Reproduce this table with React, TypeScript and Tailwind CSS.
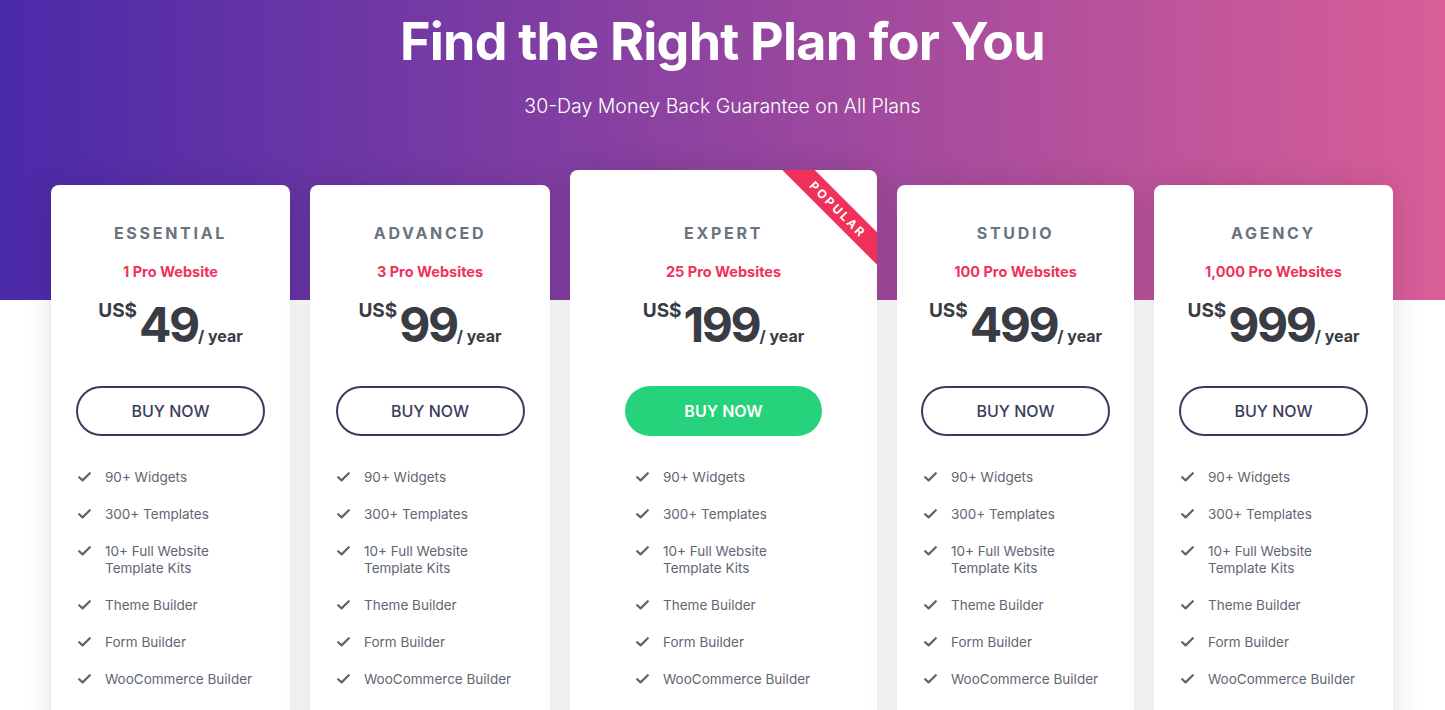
import React from "react"

interface Plan {
  name: string
  sites: string
  price: string
  width: string
  featured?: boolean
}

const plans: Plan[] = [
  { name: "ESSENTIAL", sites: "1 Pro Website", price: "49", width: "w-[239px]" },
  { name: "ADVANCED", sites: "3 Pro Websites", price: "99", width: "w-[240px]" },
  { name: "EXPERT", sites: "25 Pro Websites", price: "199", width: "w-[307px]", featured: true },
  { name: "STUDIO", sites: "100 Pro Websites", price: "499", width: "w-[237px]" },
  { name: "AGENCY", sites: "1,000 Pro Websites", price: "999", width: "w-[239px]" },
]

const features: string[][] = [
  ["90+ Widgets"],
  ["300+ Templates"],
  ["10+ Full Website", "Template Kits"],
  ["Theme Builder"],
  ["Form Builder"],
  ["WooCommerce Builder"],
  ["Popup Builder"],
  ["Premium Support"],
]

function Check() {
  return (
    <svg width="13" height="10" viewBox="0 0 13 10" className="mt-[3px] shrink-0">
      <path d="M1.2 5.2 L4.6 8.4 L11.8 1.2" fill="none" stroke="#5d6470" strokeWidth="2.2" strokeLinecap="round" strokeLinejoin="round" />
    </svg>
  )
}

function PlanCard({ plan }: { plan: Plan }) {
  return (
    <div
      className={`${plan.width} relative overflow-hidden rounded-lg bg-white shadow-[0_0_30px_rgba(0,0,0,0.12)] ${
        plan.featured ? "pt-[53px]" : "mt-[15px] pt-[38px]"
      } pb-10`}
    >
      {plan.featured && (
        <div className="absolute right-[-31px] top-[28px] flex h-[23px] w-[140px] rotate-45 items-center justify-center bg-[#f0325a] text-[12px] font-bold tracking-[0.2em] text-white">
          POPULAR
        </div>
      )}

      <h3 className="text-center text-[16px] font-bold leading-[20px] tracking-[0.17em] text-[#6a737e]">{plan.name}</h3>
      <p className="mt-5 text-center text-[14.5px] font-bold leading-[17px] text-[#f0325a]">{plan.sites}</p>

      {/* Price */}
      <div className="mt-[21px] flex items-baseline justify-center text-[#393c43]">
        <span className="self-start text-[19px] font-bold leading-none">US$</span>
        <span className="ml-[2px] text-[48px] font-bold leading-none tracking-[-0.05em]">{plan.price}</span>
        <span className="text-[16px] font-bold leading-none">/ year</span>
      </div>

      <div className="mt-[37px] flex justify-center">
        {plan.featured ? (
          <button className="h-[50px] w-[197px] rounded-full bg-[#26d27c] text-[16px] font-semibold text-white">BUY NOW</button>
        ) : (
          <button className="h-[50px] w-[189px] rounded-full border-2 border-[#3b3c5d] text-[16px] font-medium text-[#3b3c5d]">
            BUY NOW
          </button>
        )}
      </div>

      {/* Features */}
      <ul className={`mt-[33px] flex flex-col gap-5 ${plan.featured ? "pl-[66px]" : "pl-[27px]"}`}>
        {features.map((lines) => (
          <li key={lines[0]} className="flex items-start gap-[14px] text-[13.5px] leading-[17px] text-[#5f6673]">
            <Check />
            <span>
              {lines.map((l) => (
                <span key={l} className="block">
                  {l}
                </span>
              ))}
            </span>
          </li>
        ))}
      </ul>
    </div>
  )
}

export default function App() {
  return (
    <div className="min-h-screen bg-white font-['Inter',sans-serif]">
      {/* Hero */}
      <div className="h-[300px] bg-[linear-gradient(90deg,#4a2aa9_0%,#d95e97_100%)] text-center text-white">
        <h1 className="pt-[12px] text-[52px] font-bold leading-[60px] tracking-[-0.015em]">Find the Right Plan for You</h1>
        <p className="mt-[22px] text-[19.5px] font-light leading-[24px]">30-Day Money Back Guarantee on All Plans</p>
      </div>

      {/* Cards */}
      <div className="-mt-[130px] flex items-start justify-center gap-5 pr-px">
        {plans.map((p) => (
          <PlanCard key={p.name} plan={p} />
        ))}
      </div>
    </div>
  )
}
